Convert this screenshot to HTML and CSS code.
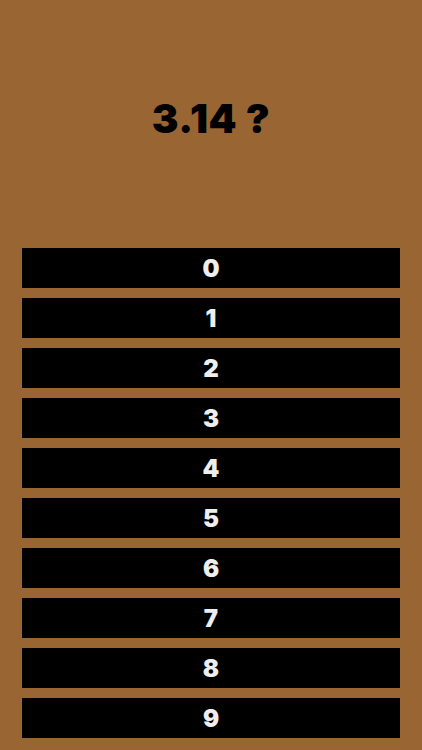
FILE: index.html
```html
<!DOCTYPE html>
<html>
<head>
<meta charset="utf-8">
<link rel="stylesheet" href="styles.css">
</head>
<body>
<div class="screen">
  <div class="title">3.14 ?</div>
  <div class="keys">
    <div class="key">0</div>
    <div class="key">1</div>
    <div class="key">2</div>
    <div class="key">3</div>
    <div class="key">4</div>
    <div class="key">5</div>
    <div class="key">6</div>
    <div class="key">7</div>
    <div class="key">8</div>
    <div class="key">9</div>
  </div>
</div>
</body>
</html>
```
FILE: styles.css
```css
html, body {
  margin: 0;
  padding: 0;
  background: #996633;
}
.screen {
  width: 422px;
  height: 750px;
  display: flex;
  flex-direction: column;
  font-family: Inter, "Liberation Sans", sans-serif;
}
.title {
  height: 248px;
  box-sizing: border-box;
  padding-top: 95px;
  text-align: center;
  font-size: 40px;
  font-weight: 900;
  line-height: 48px;
  letter-spacing: 0.5px;
  color: #000;
}
.keys {
  display: flex;
  flex-direction: column;
  gap: 10px;
  padding: 0 22px;
}
.key {
  height: 40px;
  background: #000;
  color: #eeeeee;
  font-size: 24px;
  font-weight: 900;
  display: flex;
  align-items: center;
  justify-content: center;
}
```
